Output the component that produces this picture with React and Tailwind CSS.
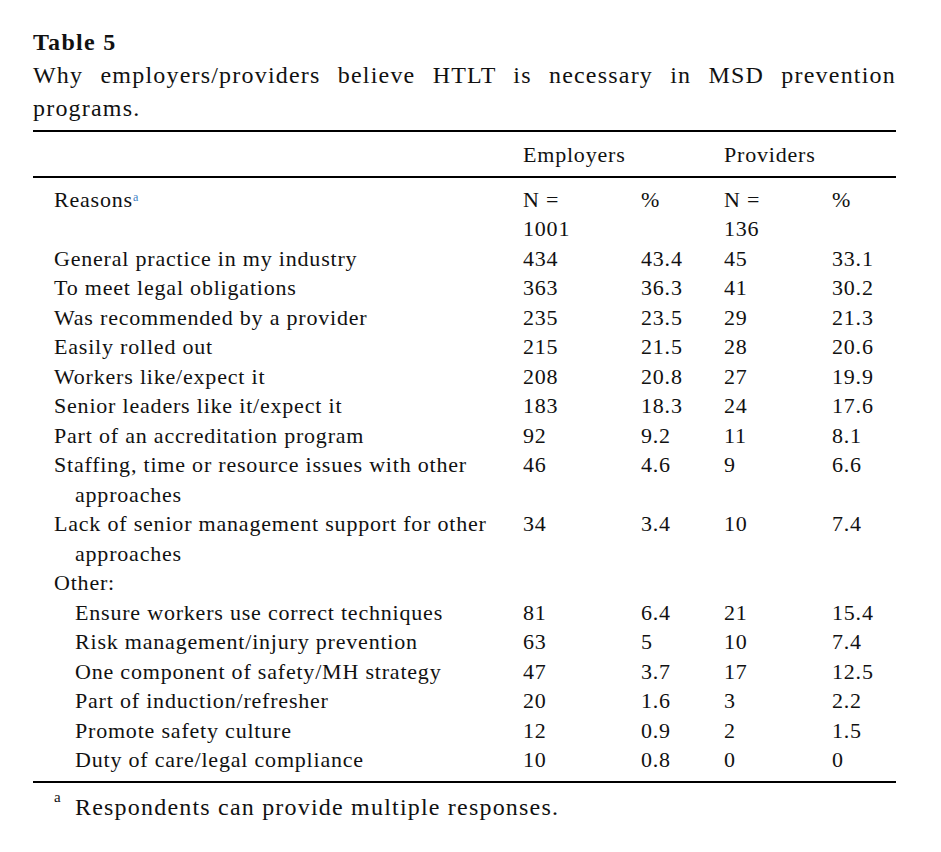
import React from 'react';

const rows = [
  { label: ['General practice in my industry'], e: '434', ep: '43.4', p: '45', pp: '33.1' },
  { label: ['To meet legal obligations'], e: '363', ep: '36.3', p: '41', pp: '30.2' },
  { label: ['Was recommended by a provider'], e: '235', ep: '23.5', p: '29', pp: '21.3' },
  { label: ['Easily rolled out'], e: '215', ep: '21.5', p: '28', pp: '20.6' },
  { label: ['Workers like/expect it'], e: '208', ep: '20.8', p: '27', pp: '19.9' },
  { label: ['Senior leaders like it/expect it'], e: '183', ep: '18.3', p: '24', pp: '17.6' },
  { label: ['Part of an accreditation program'], e: '92', ep: '9.2', p: '11', pp: '8.1' },
  { label: ['Staffing, time or resource issues with other', 'approaches'], e: '46', ep: '4.6', p: '9', pp: '6.6' },
  { label: ['Lack of senior management support for other', 'approaches'], e: '34', ep: '3.4', p: '10', pp: '7.4' },
];

const other = [
  { label: 'Ensure workers use correct techniques', e: '81', ep: '6.4', p: '21', pp: '15.4' },
  { label: 'Risk management/injury prevention', e: '63', ep: '5', p: '10', pp: '7.4' },
  { label: 'One component of safety/MH strategy', e: '47', ep: '3.7', p: '17', pp: '12.5' },
  { label: 'Part of induction/refresher', e: '20', ep: '1.6', p: '3', pp: '2.2' },
  { label: 'Promote safety culture', e: '12', ep: '0.9', p: '2', pp: '1.5' },
  { label: 'Duty of care/legal compliance', e: '10', ep: '0.8', p: '0', pp: '0' },
];

const cols = 'grid grid-cols-[469px_118px_83px_108px_1fr]';

const Row = ({ children, e, ep, p, pp }) => (
  <div className={cols}>
    <div>{children}</div>
    <div>{e}</div>
    <div>{ep}</div>
    <div>{p}</div>
    <div>{pp}</div>
  </div>
);

export default function App() {
  return (
    <div className="min-h-[852px] w-[941px] bg-white text-[#111]" style={{ fontFamily: '"Liberation Serif", serif' }}>
      <div className="ml-[33px] w-[863px] pt-[26px] text-[22px] tracking-[0.8px]">
        <div className="text-[24px] font-bold leading-[33px] tracking-[1.3px]">Table 5</div>
        <div className="text-[24px] leading-[33px] tracking-[1.2px]">
          <div className="text-justify [text-align-last:justify]">
            Why employers/providers believe HTLT is necessary in MSD prevention
          </div>
          <div>programs.</div>
        </div>

        <div className="mt-[5px] border-t-2 border-black" />

        <div className="mt-[8px] pl-[21px] leading-[29.5px]">
          <div className={cols}>
            <div />
            <div>Employers</div>
            <div />
            <div>Providers</div>
            <div />
          </div>
        </div>

        <div className="mt-[6px] border-t-2 border-black" />

        <div className="mt-[7px] pl-[21px] leading-[29.5px]">
          <div className={cols}>
            <div>
              Reasons<sup className="text-[12px] tracking-normal text-[#3b82c4]">a</sup>
            </div>
            <div>
              <div>N =</div>
              <div>1001</div>
            </div>
            <div>%</div>
            <div>
              <div>N =</div>
              <div>136</div>
            </div>
            <div>%</div>
          </div>

          {rows.map((r) => (
            <Row key={r.label[0]} e={r.e} ep={r.ep} p={r.p} pp={r.pp}>
              <div>{r.label[0]}</div>
              {r.label[1] && <div className="pl-[21px]">{r.label[1]}</div>}
            </Row>
          ))}

          <div>Other:</div>

          {other.map((r) => (
            <Row key={r.label} e={r.e} ep={r.ep} p={r.p} pp={r.pp}>
              <div className="pl-[21px]">{r.label}</div>
            </Row>
          ))}
        </div>

        <div className="mt-[6px] border-t-2 border-black" />

        <div className="mt-[10px] flex pl-[21px] text-[24px] leading-[29.5px] tracking-[1.2px]">
          <sup className="mt-[2px] w-[21px] text-[15px] leading-[20px] tracking-normal">a</sup>
          <span>Respondents can provide multiple responses.</span>
        </div>
      </div>
    </div>
  );
}
